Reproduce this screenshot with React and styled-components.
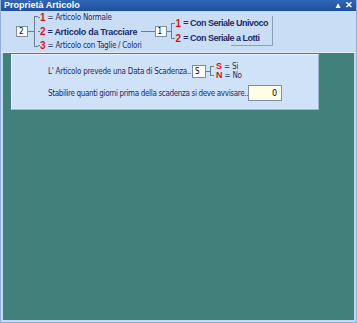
import React from 'react'
import styled, { createGlobalStyle } from 'styled-components'

const GlobalStyle = createGlobalStyle`
  html, body {
    margin: 0;
    padding: 0;
    background: #ffffff;
  }
  body {
    font-family: "DejaVu Sans", "Liberation Sans", sans-serif;
    font-stretch: condensed;
  }
`

const Window = styled.div`
  width: 357px;
  height: 323px;
  box-sizing: border-box;
  display: flex;
  flex-direction: column;
  background: #c3d9f2;
  border: 1px solid #8fb0d8;
  border-top: none;
`

const TitleBar = styled.div`
  height: 11px;
  flex: none;
  display: flex;
  align-items: center;
  justify-content: space-between;
  padding: 0 3px 0 3px;
  background: linear-gradient(#2f66b5, #1f4f9c);
  color: #ffffff;
  font-family: "Liberation Sans", Arial, sans-serif;
  font-size: 9px;
  font-weight: bold;
  line-height: 11px;
`

const TitleIcons = styled.div`
  display: flex;
  align-items: center;
  gap: 3px;
  font-size: 8px;
`

const TopPanel = styled.div`
  height: 41px;
  flex: none;
  display: flex;
  align-items: center;
  padding-left: 15px;
  background: #c9ddf5;
  border-bottom: 1px solid #e4eefb;
  color: #1b2a6b;
  font-size: 8px;
`

const ValueBox = styled.div`
  width: ${(p) => p.w || 12}px;
  height: ${(p) => p.h || 11}px;
  flex: none;
  box-sizing: border-box;
  background: ${(p) => p.bg || '#ffffff'};
  border: 1px solid #7d8da5;
  font-size: 8px;
  line-height: ${(p) => (p.h || 11) - 2}px;
  color: #000000;
  padding: 0 2px;
  text-align: ${(p) => p.align || 'left'};
  letter-spacing: 0;
`

const HLine = styled.div`
  height: 1px;
  width: ${(p) => (p.w ? `${p.w}px` : 'auto')};
  flex: ${(p) => (p.grow ? 1 : 'none')};
  background: #6c7c95;
`

const Bracket = styled.div`
  width: 4px;
  height: ${(p) => p.h}px;
  flex: none;
  box-sizing: border-box;
  border: 1px solid #6c7c95;
  border-right: none;
`

const OptionList = styled.div`
  display: flex;
  flex-direction: column;
  justify-content: space-between;
  height: ${(p) => p.h}px;
  margin-left: ${(p) => p.ml ?? 0}px;
`

const Option = styled.div`
  display: flex;
  align-items: center;
  height: 10px;
  white-space: nowrap;
  font-size: ${(p) => (p.big ? '9px' : '8px')};
  font-weight: ${(p) => (p.big ? 'bold' : 'normal')};
  letter-spacing: ${(p) => (p.big ? '-0.3px' : '-0.25px')};
  font-family: ${(p) => (p.big ? '"Liberation Sans", Arial, sans-serif' : 'inherit')};
`

const Num = styled.span`
  color: #d8111b;
  font-family: "Liberation Sans", Arial, sans-serif;
  font-weight: bold;
  font-size: ${(p) => p.size || 10}px;
  margin-right: 2px;
  letter-spacing: 0;
`

const SubGroup = styled.div`
  position: relative;
  display: flex;
  align-items: center;
  height: 30px;
  padding-right: 4px;
  margin-top: -2px;
  border-right: 1px solid #8f9db2;

  &::after {
    content: '';
    position: absolute;
    right: -1px;
    bottom: 0;
    width: 42px;
    height: 1px;
    background: #8f9db2;
  }
`

const SubOption = styled.div`
  display: flex;
  align-items: center;
  font-family: "Liberation Sans", Arial, sans-serif;
  font-size: 9px;
  font-weight: bold;
  letter-spacing: -0.5px;
  color: #1b2a6b;
  height: 12px;
  white-space: nowrap;
`

const Desk = styled.div`
  flex: 1;
  margin: 0 2px 2px 2px;
  background: #41807b;
  padding: 1px 0 0 8px;
`

const InnerPanel = styled.div`
  width: 308px;
  height: 56px;
  box-sizing: border-box;
  background: #cfe2f8;
  border: 1px solid #e9f2fd;
  border-right-color: #9fb6d4;
  border-bottom-color: #9fb6d4;
  padding: 9px 0 0 36px;
  color: #1b2a6b;
  font-size: 8px;
  display: flex;
  flex-direction: column;
  gap: 7px;
`

const Row = styled.div`
  display: flex;
  align-items: center;
  white-space: nowrap;
  height: ${(p) => p.h}px;
  letter-spacing: ${(p) => p.ls}px;
`

const YesNo = styled.div`
  display: flex;
  flex-direction: column;
  margin-left: 2px;
  font-size: 8px;
  line-height: 9px;
`

export default function App() {
  return (
    <>
      <GlobalStyle />
      <Window>
        <TitleBar>
          <span>Proprietà Articolo</span>
          <TitleIcons>
            <span>▲</span>
            <span style={{ fontSize: 9 }}>✕</span>
          </TitleIcons>
        </TitleBar>
        <TopPanel>
          <ValueBox>2</ValueBox>
          <HLine w={6} />
          <Bracket h={31} />
          <OptionList h={38}>
            <Option>
              <HLine w={2} />
              <Num>1</Num>= Articolo Normale
            </Option>
            <Option big>
              <HLine w={2} />
              <Num>2</Num>= Articolo da Tracciare
              <HLine grow style={{ marginLeft: 4 }} />
            </Option>
            <Option>
              <HLine w={2} />
              <Num>3</Num>= Articolo con Taglie / Colori
            </Option>
          </OptionList>
          <HLine w={13} />
          <ValueBox>1</ValueBox>
          <HLine w={4} />
          <SubGroup>
            <Bracket h={16} />
            <OptionList h={27} ml={1}>
              <SubOption>
                <Num>1</Num>= Con Seriale Univoco
              </SubOption>
              <SubOption>
                <Num>2</Num>= Con Seriale a Lotti
              </SubOption>
            </OptionList>
          </SubGroup>
        </TopPanel>
        <Desk>
          <InnerPanel>
            <Row h={14} ls={-0.24}>
              L' Articolo prevede una Data di Scadenza..
              <ValueBox w={14} h={13} style={{ marginLeft: 1 }}>S</ValueBox>
              <HLine w={4} />
              <Bracket h={10} />
              <YesNo>
                <span><Num size={9}>S</Num>= Si</span>
                <span><Num size={9}>N</Num>= No</span>
              </YesNo>
            </Row>
            <Row h={16} ls={-0.34}>
              Stabilire quanti giorni prima della scadenza si deve avvisare..
              <ValueBox w={34} h={16} bg="#ffffe6" align="right" style={{ paddingRight: 4, fontSize: 9 }}>
                0
              </ValueBox>
            </Row>
          </InnerPanel>
        </Desk>
      </Window>
    </>
  )
}
